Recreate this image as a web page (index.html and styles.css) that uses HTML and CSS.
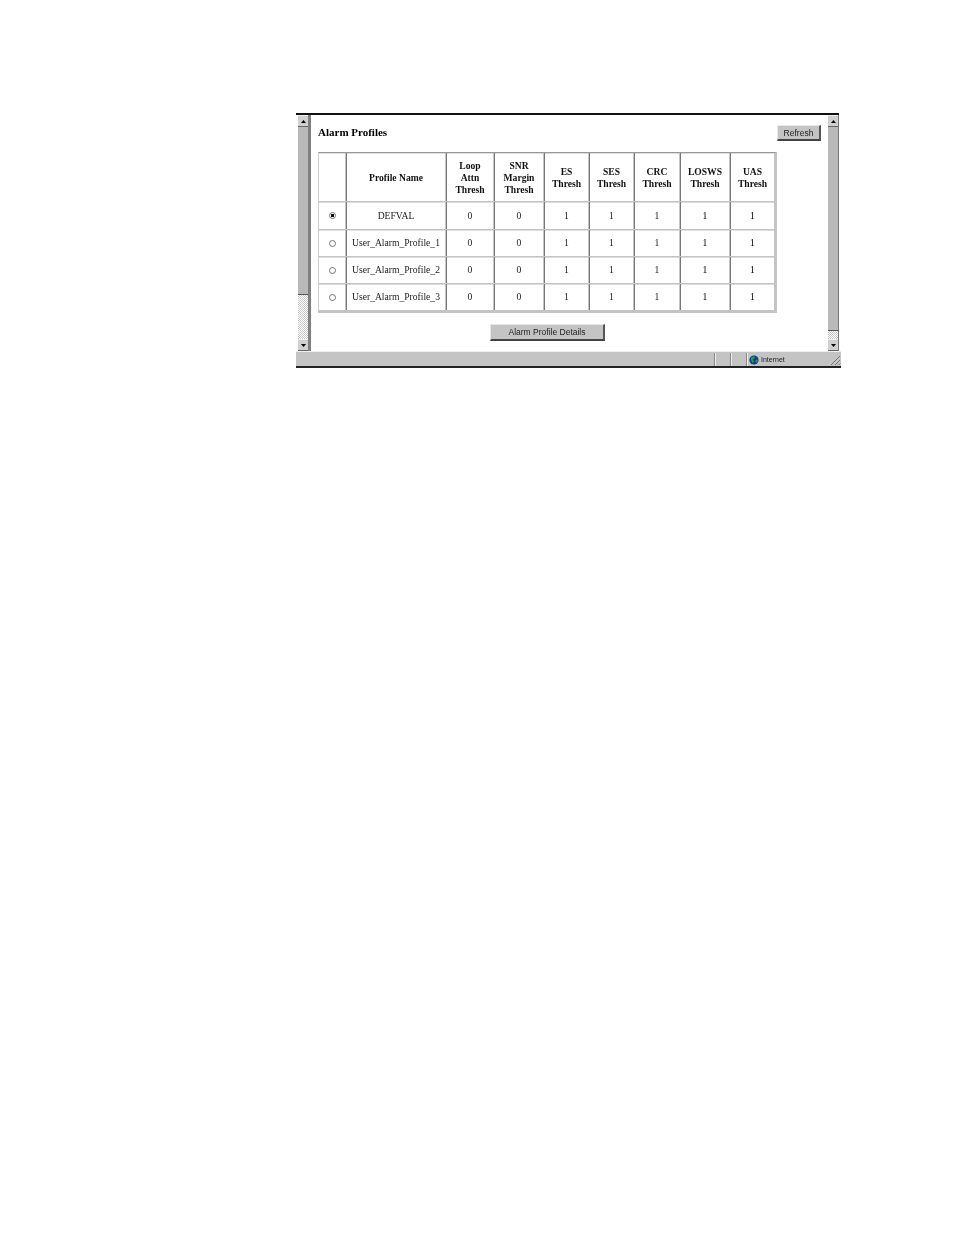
FILE: index.html
```html
<!DOCTYPE html>
<html lang="en">
<head>
<meta charset="utf-8">
<title>Alarm Profiles</title>
<link rel="stylesheet" href="styles.css">
</head>
<body>
<div class="window">
  <div class="viewport">
    <div class="scrollbar">
      <div class="arrow"><svg width="7" height="5" viewBox="0 0 7 5"><path d="M3.500 1 6 4H1z" fill="#000"/></svg></div>
      <div class="thumb left-thumb"></div>
      <div class="track"></div>
      <div class="arrow"><svg width="7" height="5" viewBox="0 0 7 5"><path d="M1 1h5L3.500 4z" fill="#000"/></svg></div>
    </div>
    <div class="page">
      <div class="page-head">
        <h1>Alarm Profiles</h1>
        <button class="btn refresh" type="button">Refresh</button>
      </div>
      <table>
        <colgroup>
          <col class="c-radio"><col class="c-name"><col class="c-a"><col class="c-b"><col class="c-c"><col class="c-d"><col class="c-e"><col class="c-f"><col class="c-g">
        </colgroup>
        <thead>
          <tr>
            <th></th><th>Profile Name</th><th>Loop<br>Attn<br>Thresh</th><th>SNR<br>Margin<br>Thresh</th><th>ES<br>Thresh</th><th>SES<br>Thresh</th><th>CRC<br>Thresh</th><th>LOSWS<br>Thresh</th><th>UAS<br>Thresh</th>
          </tr>
        </thead>
        <tbody>
          <tr><td><span class="radio on"></span></td><td>DEFVAL</td><td>0</td><td>0</td><td>1</td><td>1</td><td>1</td><td>1</td><td>1</td></tr>
          <tr><td><span class="radio"></span></td><td>User_Alarm_Profile_1</td><td>0</td><td>0</td><td>1</td><td>1</td><td>1</td><td>1</td><td>1</td></tr>
          <tr><td><span class="radio"></span></td><td>User_Alarm_Profile_2</td><td>0</td><td>0</td><td>1</td><td>1</td><td>1</td><td>1</td><td>1</td></tr>
          <tr><td><span class="radio"></span></td><td>User_Alarm_Profile_3</td><td>0</td><td>0</td><td>1</td><td>1</td><td>1</td><td>1</td><td>1</td></tr>
        </tbody>
      </table>
      <div class="actions"><button class="btn details" type="button">Alarm Profile Details</button></div>
    </div>
    <div class="scrollbar right">
      <div class="arrow"><svg width="7" height="5" viewBox="0 0 7 5"><path d="M3.500 1 6 4H1z" fill="#000"/></svg></div>
      <div class="thumb right-thumb"></div>
      <div class="track"></div>
      <div class="arrow"><svg width="7" height="5" viewBox="0 0 7 5"><path d="M1 1h5L3.500 4z" fill="#000"/></svg></div>
    </div>
  </div>
  <div class="status">
    <div class="pane grow"></div>
    <div class="pane small"></div>
    <div class="pane small"></div>
    <div class="pane zone">
      <svg width="10" height="10" viewBox="0 0 10 10"><circle cx="5" cy="5" r="4.600" fill="#0a3c9c"/><path d="M2 2.500 5 1l1 2-2 1.500L5 7 3.500 8 2 5zM6.500 5 9 4.500 8 8 6.500 7z" fill="#2f9a3a"/></svg>
      <span>Internet</span>
    </div>
    <div class="grip"><svg width="11" height="11" viewBox="0 0 11 11"><path d="M1 10 10 1M5 10l5-5M8.500 10 10 8.500" stroke="#777" fill="none"/></svg></div>
  </div>
</div>
</body>
</html>
```
FILE: styles.css
```css
html, body { margin: 0; padding: 0; background: #fff; }
body { width: 954px; height: 1235px; overflow: hidden; }
.window {
  margin: 113px 0 0 296px;
  width: 545px;
  height: 255px;
  display: flex;
  flex-direction: column;
  box-sizing: border-box;
  border-bottom: 2px solid #222;
  background: #fff;
  filter: blur(0.3px);
}
.viewport { flex: 1; display: flex; min-height: 0; background: #fff; border-top: 2px solid #111; margin-right: 2px; }
.scrollbar {
  width: 15px;
  padding-left: 2px;
  box-sizing: border-box;
  display: flex;
  flex-direction: column;
  background: #fff;
  border-right: 3px solid #808080;
}
.scrollbar.right { width: 11px; margin-left: auto; padding-left: 0; border-right: 1px solid #777; background: #fff; }
.arrow {
  height: 10px;
  flex: none;
  background: #d0d0d0;
  border-top: 1px solid #eee;
  border-bottom: 1px solid #666;
  display: flex;
  align-items: center;
  justify-content: center;
}
.thumb { background: #b9b9b9; border-bottom: 1px solid #555; flex: none; }
.left-thumb { height: 167px; }
.right-thumb { height: 203px; }
.track {
  flex: 1;
  background-color: #fff;
  background-image: conic-gradient(#c8c8c8 25%, #fff 0 50%, #c8c8c8 0 75%, #fff 0);
  background-size: 2px 2px;
}
.page { width: 515px; flex: none; padding: 0 0 0 7px; box-sizing: border-box; font-family: "Liberation Serif", serif; color: #111; }
.page-head { display: flex; justify-content: space-between; align-items: flex-start; height: 37px; padding: 10px 0 0; box-sizing: border-box; width: 503px; }
h1 { margin: 1px 0 0; font-size: 11px; font-weight: bold; line-height: 12px; color: #000; }
.btn {
  font-family: "Liberation Sans", sans-serif;
  font-size: 8.500px;
  color: #222;
  background: #c4c4c4;
  border: 0;
  border-top: 1px solid #e8e8e8;
  border-left: 1px solid #e8e8e8;
  border-right: 2px solid #555;
  border-bottom: 2px solid #444;
  padding: 0;
}
.refresh { width: 44px; height: 16px; }
table {
  border-collapse: separate;
  border-spacing: 0;
  table-layout: fixed;
  width: 459px;
  border-top: 1px solid #999;
  border-left: 1px solid #ccc;
  border-right: 2px solid #c4c4c4;
  border-bottom: 2px solid #c4c4c4;
}
.c-radio { width: 27px; }
.c-name { width: 100px; }
.c-a { width: 48px; }
.c-b { width: 50px; }
.c-c { width: 45px; }
.c-d { width: 45px; }
.c-e { width: 46px; }
.c-f { width: 50px; }
.c-g { width: 45px; }
th, td {
  padding: 0 0 0 1px;
  text-align: center;
  font-size: 9.600px;
  line-height: 12px;
  color: #222;
  border-right: 1px solid #c4c4c4;
  border-bottom: 1px solid #c4c4c4;
  box-shadow: inset 1px 0 0 #777, inset 0 1px 0 #ddd;
}
th { height: 47px; font-weight: bold; color: #111; padding-top: 1px; box-sizing: content-box; }
th:first-child, td:first-child { box-shadow: inset 0 1px 0 #ddd; padding-left: 0; }
td { height: 26px; }
tbody tr:first-child td { height: 27px; }
td:nth-child(n+8) { color: #000; }
.radio {
  display: block;
  width: 5px;
  height: 5px;
  margin: 0 auto;
  border: 1px solid #777;
  border-radius: 50%;
  box-sizing: content-box;
}
.radio.on { background: radial-gradient(circle, #111 0 1.500px, #fff 2px); }
.actions { width: 459px; display: flex; justify-content: center; padding-top: 11px; }
.details { width: 115px; height: 17px; }
.status {
  height: 14px;
  flex: none;
  display: flex;
  align-items: stretch;
  background: #c4c4c4;
  border-top: 1px solid #eee;
  font-family: "Liberation Sans", sans-serif;
  font-size: 7px;
  color: #222;
}
.pane { border-left: 1px solid #888; box-shadow: inset 1px 0 0 #eee; margin-top: 1px; }
.grow { flex: 1; border-left: 0; box-shadow: none; }
.small { width: 15px; }
.zone { width: 83px; display: flex; align-items: center; gap: 2px; padding-left: 2px; box-sizing: border-box; }
.grip { width: 12px; display: flex; align-items: flex-end; justify-content: flex-end; }
```
